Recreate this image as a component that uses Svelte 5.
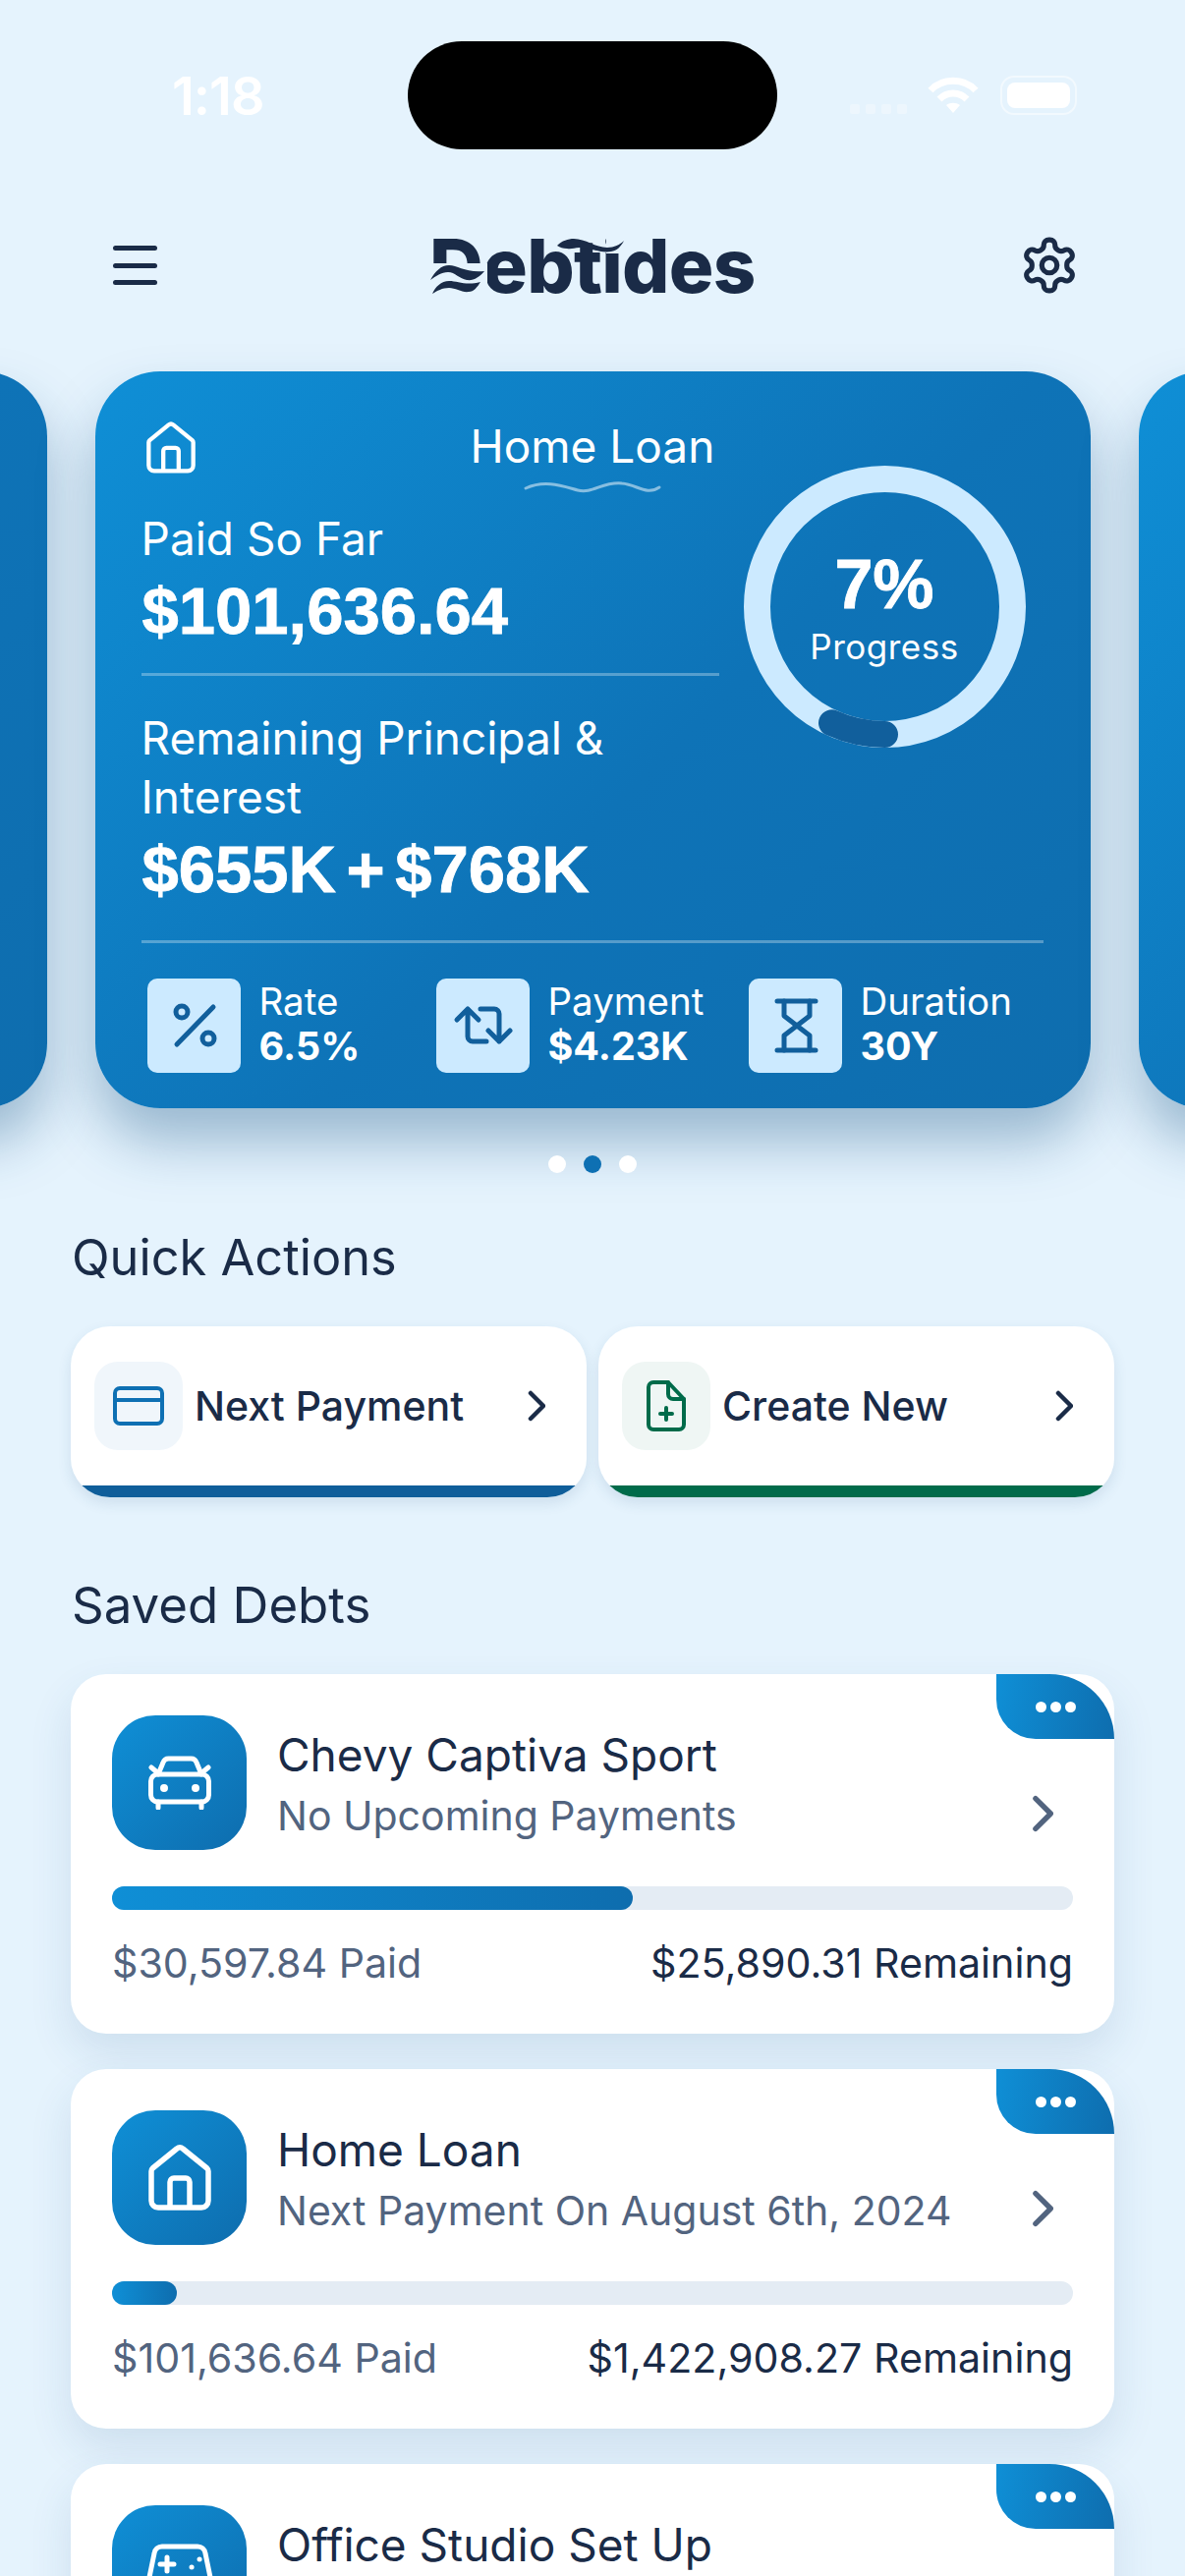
<script lang="ts">
  const stats = [
    { label: "Rate", value: "6.5%", icon: "percent" },
    { label: "Payment", value: "$4.23K", icon: "repeat" },
    { label: "Duration", value: "30Y", icon: "hourglass" }
  ];

  const debts = [
    { title: "Chevy Captiva Sport", sub: "No Upcoming Payments", paid: "$30,597.84 Paid", left: "$25,890.31 Remaining", pct: 54.2, icon: "car" },
    { title: "Home Loan", sub: "Next Payment On August 6th, 2024", paid: "$101,636.64 Paid", left: "$1,422,908.27 Remaining", pct: 6.7, icon: "home" },
    { title: "Office Studio Set Up", icon: "game" }
  ];
</script>

{#snippet house(w, h)}
  <svg width={w} height={h} viewBox="0 0 64 67" fill="none" stroke="currentColor" stroke-width="5.5" stroke-linejoin="round">
    <path d="M3 27a4 4 0 0 1 1.300-3L29 4a4.500 4.500 0 0 1 6 0l24.700 20a4 4 0 0 1 1.300 3v30a7 7 0 0 1-7 7H10a7 7 0 0 1-7-7Z" />
    <path d="M22 64V38a4 4 0 0 1 4-4h12a4 4 0 0 1 4 4v26" />
  </svg>
{/snippet}

{#snippet chevron(w, h)}
  <svg width={w} height={h} viewBox="0 0 18 32" fill="none" stroke="currentColor" stroke-width="4.500" stroke-linecap="round" stroke-linejoin="round">
    <path d="M3 3l13 13L3 29" />
  </svg>
{/snippet}

<div class="page">
  <div class="status">
    <div class="time">1:18</div>
    <div class="island"></div>
    <div class="sys">
      <div class="signal"><i></i><i></i><i></i><i></i></div>
      <svg width="52" height="38" viewBox="0 0 52 38" fill="none" stroke="#fff" stroke-width="7">
        <path d="M3 14C15 1 37 1 49 14" />
        <path d="M12 23c8-8 20-8 28 0" />
        <path d="M26 37l-7-8c4-3 10-3 14 0Z" fill="#fff" stroke="none" />
      </svg>
      <div class="battery"><span></span></div>
    </div>
  </div>

  <header class="top">
    <button class="menu" aria-label="Menu"><i></i><i></i><i></i></button>
    <div class="logo">
      <span class="logo-text">Debtides</span>
      <svg class="logo-art" viewBox="437 232 330 76" aria-hidden="true">
        <rect x="436" y="268" width="60" height="34" fill="#e5f3fd" />
        <rect x="617" y="234" width="20" height="24" fill="#e5f3fd" />
        <path fill="#1a2b47" d="M438 285C443 276 449 270 457 270C466 270 474 278 493 276C488 282 482 286 475 285C468 284 463 277 456 277C449 277 444 281 438 285Z" />
        <path fill="#1a2b47" d="M440 299C443 292 449 286 457 286C466 286 474 291 489 287C486 292 482 297 477 297C470 298 464 293 457 293C450 293 445 296 440 299Z" />
        <path fill="#1a2b47" d="M567 250C572 245 578 243 584 243C596 243 606 252 618 252C625 252 631 249 635 245C632 251 628 255 622 256C612 258 600 252 590 252C584 252 582 254 577 253C573 253 570 252 567 250Z" />
      </svg>
    </div>
    <button class="gear" aria-label="Settings">
      <svg width="62" height="62" viewBox="0 0 24 24" fill="none" stroke="#1a2b47" stroke-width="2" stroke-linecap="round" stroke-linejoin="round">
        <path d="M12.220 2h-.44a2 2 0 0 0-2 2v.18a2 2 0 0 1-1 1.730l-.43.25a2 2 0 0 1-2 0l-.15-.08a2 2 0 0 0-2.730.73l-.22.38a2 2 0 0 0 .73 2.730l.15.1a2 2 0 0 1 1 1.720v.51a2 2 0 0 1-1 1.740l-.15.09a2 2 0 0 0-.73 2.730l.22.38a2 2 0 0 0 2.730.73l.15-.08a2 2 0 0 1 2 0l.43.25a2 2 0 0 1 1 1.730V20a2 2 0 0 0 2 2h.44a2 2 0 0 0 2-2v-.18a2 2 0 0 1 1-1.730l.43-.25a2 2 0 0 1 2 0l.15.08a2 2 0 0 0 2.730-.73l.22-.39a2 2 0 0 0-.73-2.730l-.15-.08a2 2 0 0 1-1-1.740v-.5a2 2 0 0 1 1-1.740l.15-.09a2 2 0 0 0 .73-2.730l-.22-.38a2 2 0 0 0-2.730-.73l-.15.08a2 2 0 0 1-2 0l-.43-.25a2 2 0 0 1-1-1.730V4a2 2 0 0 0-2-2z" />
        <circle cx="12" cy="12" r="3" />
      </svg>
    </button>
  </header>

  <section class="carousel">
    <div class="hero side"></div>
    <div class="hero">
      <div class="hero-main">
        <div class="hero-left">
          <div class="hero-head">
            {@render house(50, 53)}
            <div class="hero-title">
              <span>Home Loan</span>
              <svg width="140" height="14" viewBox="0 0 140 14" fill="none" stroke="#fff" stroke-opacity="0.5" stroke-width="3" stroke-linecap="round">
                <path d="M2 8C22-1 40 6 55 10C70 14 80 1 100 3C115 4 125 16 138 7" />
              </svg>
            </div>
          </div>
          <div class="hero-label">Paid So Far</div>
          <div class="hero-amount">$101,636.64</div>
          <div class="rule"></div>
          <div class="hero-label wrap">Remaining Principal &amp; Interest</div>
          <div class="hero-amount">$655K + $768K</div>
        </div>
        <div class="donut">
          <svg width="287" height="287" viewBox="0 0 287 287" fill="none" stroke-width="27">
            <circle cx="143.500" cy="143.500" r="130" stroke="#cceaff" />
            <path d="M143.500 273.500A130 130 0 0 1 89.500 261.800" stroke="#115f9c" stroke-linecap="round" />
          </svg>
          <div class="donut-text">
            <b>7%</b>
            <span>Progress</span>
          </div>
        </div>
      </div>
      <div class="rule full"></div>
      <div class="stats">
        {#each stats as s}
          <div class="stat">
            <div class="stat-icon">
              <svg width="95" height="96" viewBox="0 0 95 96" fill="none" stroke="#115f9c" stroke-width="5" stroke-linecap="round" stroke-linejoin="round">
                {#if s.icon === "percent"}
                  <path d="M67 29L30 67" />
                  <circle cx="35" cy="34" r="6" />
                  <circle cx="62" cy="61" r="6" />
                {:else if s.icon === "repeat"}
                  <path d="M21 42l11-11 11 11M32 31v28a5 5 0 0 0 5 5h14" />
                  <path d="M53 53l11 11 11-11M64 64V36a5 5 0 0 0-5-5H45" />
                {:else}
                  <path d="M29 23h39M29 73h39" />
                  <path d="M36 23v15l26 20v15M62 23v15L36 58v15" />
                {/if}
              </svg>
            </div>
            <div class="stat-text">
              <span>{s.label}</span>
              <b>{s.value}</b>
            </div>
          </div>
        {/each}
      </div>
    </div>
    <div class="hero side right"></div>
  </section>

  <div class="dots"><i></i><i class="on"></i><i></i></div>

  <h2 class="section first">Quick Actions</h2>
  <div class="actions">
    <div class="action blue">
      <div class="action-icon">
        <svg width="90" height="90" viewBox="0 0 90 90" fill="none" stroke="#0e70b3" stroke-width="4" stroke-linejoin="round">
          <rect x="21" y="27" width="48" height="36" rx="5" />
          <path d="M21 39h48" />
        </svg>
      </div>
      <span>Next Payment</span>
      <div class="action-chev">{@render chevron(18, 32)}</div>
    </div>
    <div class="action green">
      <div class="action-icon">
        <svg width="90" height="90" viewBox="0 0 90 90" fill="none" stroke="#006b4a" stroke-width="4" stroke-linecap="round" stroke-linejoin="round">
          <path d="M32 21h15l16 17v26a5 5 0 0 1-5 5H32a5 5 0 0 1-5-5V26a5 5 0 0 1 5-5Z" />
          <path d="M47 21v12a5 5 0 0 0 5 5h11" />
          <path d="M45 47v12M39 53h12" />
        </svg>
      </div>
      <span>Create New</span>
      <div class="action-chev">{@render chevron(18, 32)}</div>
    </div>
  </div>

  <h2 class="section">Saved Debts</h2>
  <div class="debts">
    {#each debts as d}
      <article class="debt">
        <div class="tab"><i></i><i></i><i></i></div>
        <div class="debt-row">
          <div class="debt-icon">
            {#if d.icon === "car"}
              <svg width="64" height="55" viewBox="0 0 64 55" fill="none" stroke="#fff" stroke-width="5" stroke-linecap="round" stroke-linejoin="round">
                <rect x="2.500" y="19" width="59" height="28" rx="7" />
                <path d="M10 19l5-12a6 6 0 0 1 6-4h22a6 6 0 0 1 6 4l5 12" />
                <path d="M3 12l6 5M61 12l-6 5M10 47v6M54 47v6" />
                <circle cx="16" cy="33" r="1.500" fill="#fff" />
                <circle cx="48" cy="33" r="1.500" fill="#fff" />
              </svg>
            {:else if d.icon === "home"}
              {@render house(64, 67)}
            {:else}
              <svg width="72" height="60" viewBox="0 0 72 60" fill="none" stroke="#fff" stroke-width="5" stroke-linecap="round" stroke-linejoin="round">
                <path d="M18 3h36a8 8 0 0 1 8 7l7 34a8 8 0 0 1-14 6l-7-8H20l-7 8a8 8 0 0 1-10-6l7-34a8 8 0 0 1 8-7Z" />
                <path d="M23 14v14M16 21h14M48 24h.1M56 16h.1" />
              </svg>
            {/if}
          </div>
          <div class="debt-text">
            <div class="debt-title">{d.title}</div>
            {#if d.sub}<div class="debt-sub">{d.sub}</div>{/if}
          </div>
          {#if d.sub}<div class="debt-chev">{@render chevron(22, 38)}</div>{/if}
        </div>
        {#if d.sub}
          <div class="track"><div class="fill" style="width: {d.pct}%"></div></div>
          <div class="debt-foot">
            <span class="paid">{d.paid}</span>
            <span>{d.left}</span>
          </div>
        {/if}
      </article>
    {/each}
  </div>
</div>

<style>
  :global(body) {
    margin: 0;
    background: #e5f3fd;
  }

  .page {
    width: 1206px;
    height: 2622px;
    overflow: hidden;
    background: #e5f3fd;
    color: #1a2b47;
    font-family: Inter, "Noto Sans", sans-serif;
  }

  .status {
    display: flex;
    align-items: center;
    height: 110px;
    padding-top: 42px;
  }

  .time {
    width: 415px;
    box-sizing: border-box;
    padding-left: 175px;
    color: #fff;
    font-size: 54px;
    font-weight: 600;
    letter-spacing: -1px;
  }

  .island {
    width: 376px;
    height: 110px;
    border-radius: 55px;
    background: #000;
  }

  .sys {
    display: flex;
    align-items: center;
    padding-left: 74px;
  }

  .signal {
    display: flex;
    gap: 6px;
    align-items: flex-end;
    height: 38px;
    margin-right: 21px;
  }

  .signal i {
    width: 10px;
    height: 10px;
    border-radius: 2px;
    background: rgba(255, 255, 255, 0.3);
  }

  .battery {
    box-sizing: border-box;
    width: 78px;
    height: 40px;
    margin-left: 22px;
    padding: 5px;
    border: 2px solid rgba(255, 255, 255, 0.5);
    border-radius: 14px;
  }

  .battery span {
    display: block;
    height: 100%;
    border-radius: 8px;
    background: #fff;
  }

  .top {
    display: flex;
    align-items: center;
    justify-content: space-between;
    height: 76px;
    margin-top: 80px;
    padding: 0 107px 0 115px;
  }

  button {
    padding: 0;
    border: 0;
    background: none;
  }

  .menu {
    display: flex;
    flex-direction: column;
    gap: 12.500px;
    width: 45px;
  }

  .menu i {
    height: 5px;
    border-radius: 3px;
    background: #1a2b47;
  }

  .gear {
    display: flex;
  }

  .logo {
    position: relative;
    width: 330px;
    height: 76px;
    margin-left: 7px;
  }

  .logo-text {
    display: block;
    color: #1a2b47;
    font-size: 76px;
    font-weight: 800;
    line-height: 76px;
    letter-spacing: -0.7px;
    white-space: nowrap;
  }

  .logo-art {
    position: absolute;
    inset: 0;
    width: 330px;
    height: 76px;
  }

  .carousel {
    display: flex;
    justify-content: center;
    gap: 49px;
    margin-top: 70px;
  }

  .hero {
    flex: 0 0 1013px;
    box-sizing: border-box;
    height: 750px;
    padding: 51px 48px 0 47px;
    border-radius: 66px;
    background: linear-gradient(135deg, #0f8fd6 0%, #0e73b7 55%, #0e6dae 100%);
    box-shadow: 0 34px 56px rgba(20, 80, 130, 0.36);
    color: #fff;
  }

  .hero-main {
    display: grid;
    grid-template-columns: 588px 1fr;
  }

  .hero-head {
    display: flex;
    height: 89px;
    padding-left: 5px;
    box-sizing: border-box;
  }

  .hero-title {
    display: flex;
    flex-direction: column;
    align-items: center;
    margin-left: 280px;
    font-size: 46px;
    line-height: 50px;
  }

  .hero-title svg {
    margin-top: 10px;
  }

  .hero-label {
    font-size: 46px;
    line-height: 60px;
  }

  .hero-label.wrap {
    width: 520px;
    margin-top: 33px;
  }

  .hero-amount {
    margin-top: 9px;
    padding-left: 1px;
    font-family: "Liberation Sans", Arial, sans-serif;
    font-size: 67px;
    font-weight: 700;
    line-height: 70px;
    word-spacing: -8px;
    -webkit-text-stroke: 0.8px #fff;
  }

  .rule {
    height: 3px;
    margin-top: 28px;
    background: rgba(255, 255, 255, 0.3);
  }

  .rule.full {
    margin-top: 37px;
  }

  .donut {
    position: relative;
    width: 287px;
    height: 287px;
    margin: 45px 0 0 25px;
  }

  .donut svg {
    display: block;
  }

  .donut-text {
    position: absolute;
    inset: 0;
    display: flex;
    flex-direction: column;
    align-items: center;
    padding-top: 80px;
  }

  .donut-text b {
    font-family: "Liberation Sans", Arial, sans-serif;
    font-size: 70px;
    line-height: 82px;
    -webkit-text-stroke: 0.8px #fff;
  }

  .donut-text span {
    margin-top: 1px;
    font-size: 35px;
    line-height: 42px;
    letter-spacing: 0.5px;
  }

  .stats {
    display: grid;
    grid-template-columns: 294px 318px 1fr;
    margin-top: 36px;
    padding-left: 6px;
  }

  .stat {
    display: flex;
    gap: 19px;
    align-items: center;
  }

  .stat-icon {
    width: 95px;
    height: 96px;
    border-radius: 10px;
    background: #cceaff;
  }

  .stat-icon svg {
    display: block;
  }

  .stat-text {
    display: flex;
    flex-direction: column;
    font-size: 38.500px;
    line-height: 46px;
  }

  .stat-text span {
    margin-top: -4px;
  }

  .stat-text b {
    font-size: 39.500px;
    font-weight: 700;
  }

  .dots {
    display: flex;
    justify-content: center;
    gap: 18px;
    margin-top: 48px;
  }

  .dots i {
    width: 18px;
    height: 18px;
    border-radius: 50%;
    background: #fff;
  }

  .dots i.on {
    background: #0e70b3;
  }

  .section {
    height: 60px;
    margin: 80px 0 40px 73px;
    font-size: 51px;
    font-weight: 400;
    line-height: 60px;
  }

  .section.first {
    margin-top: 56px;
    font-size: 50.500px;
  }

  .actions {
    display: flex;
    gap: 12px;
    padding-left: 72px;
  }

  .action {
    display: flex;
    align-items: center;
    box-sizing: border-box;
    width: 525px;
    height: 174px;
    padding: 0 42px 12px 24px;
    border-radius: 40px;
    box-shadow: 0 6px 14px rgba(30, 80, 120, 0.12);
    font-size: 41px;
    font-weight: 500;
  }

  .action.blue {
    background: linear-gradient(#fff 162px, #0f5e9a 162px);
  }

  .action.green {
    background: linear-gradient(#fff 162px, #006b4a 162px);
  }

  .action-icon {
    flex: none;
    width: 90px;
    height: 90px;
    margin-right: 12px;
    border-radius: 24px;
    background: #f0f6fb;
  }

  .green .action-icon {
    background: #eff6f4;
  }

  .action-chev {
    display: flex;
    margin-left: auto;
  }

  .debts {
    display: flex;
    flex-direction: column;
    gap: 36px;
    padding: 0 72px;
  }

  .debt {
    position: relative;
    flex: none;
    box-sizing: border-box;
    height: 366px;
    padding: 42px 42px 0;
    border-radius: 36px;
    background: #fff;
    box-shadow: 0 20px 44px rgba(30, 80, 130, 0.12);
  }

  .tab {
    position: absolute;
    top: 0;
    right: 0;
    display: flex;
    align-items: center;
    justify-content: flex-end;
    gap: 4px;
    box-sizing: border-box;
    width: 120px;
    height: 66px;
    padding-right: 39px;
    border-radius: 0 66px 0 40px;
    background: linear-gradient(100deg, #0f8fd6, #0e6dae);
  }

  .tab i {
    width: 11px;
    height: 11px;
    border-radius: 50%;
    background: #fff;
  }

  .debt-row {
    display: flex;
    height: 137px;
  }

  .debt-icon {
    display: flex;
    flex: none;
    align-items: center;
    justify-content: center;
    width: 137px;
    height: 137px;
    border-radius: 44px;
    background: linear-gradient(135deg, #0f8fd6, #0e6dae);
    color: #fff;
  }

  .debt-text {
    padding: 10px 0 0 31px;
  }

  .debt-title {
    font-size: 46px;
    line-height: 60px;
  }

  .debt-sub {
    margin-top: 2px;
    color: #52647f;
    font-size: 41px;
    line-height: 60px;
  }

  .debt-chev {
    display: flex;
    margin: 81px 20px 0 auto;
    color: #52647f;
  }

  .track {
    height: 24px;
    margin-top: 37px;
    border-radius: 12px;
    background: #e4ecf4;
  }

  .fill {
    height: 100%;
    border-radius: 12px;
    background: linear-gradient(90deg, #0f8fd6, #0e6dae);
  }

  .debt-foot {
    display: flex;
    justify-content: space-between;
    margin-top: 29px;
    font-size: 41.200px;
    line-height: 50px;
  }

  .paid {
    color: #52647f;
  }
</style>
